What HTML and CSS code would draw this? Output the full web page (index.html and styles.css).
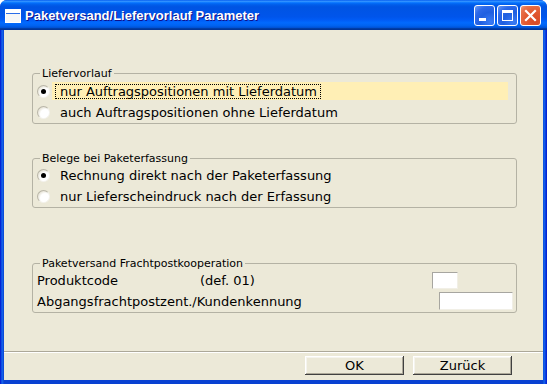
FILE: index.html
```html
<!DOCTYPE html>
<html lang="de">
<head>
<meta charset="utf-8">
<title>Paketversand/Liefervorlauf Parameter</title>
<link rel="stylesheet" href="styles.css">
</head>
<body>
<div class="window">
  <div class="titlebar">
    <svg class="app-icon" width="16" height="14" viewBox="0 0 16 14">
      <rect x="0.5" y="0.5" width="15" height="13" fill="#fff" stroke="#fff"/>
      <rect x="1" y="1" width="14" height="3" fill="#fff"/>
      <rect x="1" y="4" width="14" height="1" fill="#2a6ce8"/>
      <rect x="1" y="5" width="14" height="8" fill="#f6f6f6"/>
    </svg>
    <span class="title">Paketversand/Liefervorlauf Parameter</span>
    <div class="controls">
      <span class="ctl ctl-min"><svg width="19" height="19" viewBox="0 0 19 19"><rect x="4" y="12" width="7" height="3" fill="#fff"/></svg></span>
      <span class="ctl ctl-max"><svg width="19" height="19" viewBox="0 0 19 19"><rect x="4.5" y="4.5" width="10" height="10" fill="none" stroke="#fff" stroke-width="1"/><rect x="4" y="4" width="11" height="3" fill="#fff"/></svg></span>
      <span class="ctl ctl-close"><svg width="19" height="19" viewBox="0 0 19 19"><path d="M5 5 L14 14 M14 5 L5 14" stroke="#fff" stroke-width="2.2" stroke-linecap="square"/></svg></span>
    </div>
  </div>
  <div class="client">
    <div class="content">
      <fieldset class="group g1">
        <legend>Liefervorlauf</legend>
        <div class="opt">
          <span class="radio checked"></span>
          <span class="lbl hl"><span class="focus">nur Auftragspositionen mit Lieferdatum</span></span>
        </div>
        <div class="opt">
          <span class="radio"></span>
          <span class="lbl plain">auch Auftragspositionen ohne Lieferdatum</span>
        </div>
      </fieldset>

      <fieldset class="group g2">
        <legend>Belege bei Paketerfassung</legend>
        <div class="opt">
          <span class="radio checked"></span>
          <span class="lbl plain">Rechnung direkt nach der Paketerfassung</span>
        </div>
        <div class="opt">
          <span class="radio"></span>
          <span class="lbl plain">nur Lieferscheindruck nach der Erfassung</span>
        </div>
      </fieldset>

      <fieldset class="group g3">
        <legend>Paketversand Frachtpostkooperation</legend>
        <div class="field-row r1">
          <span class="fl-label">Produktcode</span>
          <span class="fl-hint">(def. 01)</span>
          <span class="input in-code"></span>
        </div>
        <div class="field-row r2">
          <span class="fl-label">Abgangsfrachtpostzent./Kundenkennung</span>
          <span class="input in-kenn"></span>
        </div>
      </fieldset>
    </div>
    <div class="footer">
      <button class="btn">OK</button>
      <button class="btn">Zurück</button>
    </div>
  </div>
</div>
</body>
</html>
```
FILE: styles.css
```css
html, body {
  margin: 0;
  padding: 0;
  background: #ffffff;
}

body {
  font-family: "DejaVu Sans", Verdana, sans-serif;
  font-size: 13px;
  color: #000;
}

.window {
  width: 547px;
  height: 384px;
  display: flex;
  flex-direction: column;
  background: linear-gradient(to right, #0019cf 0, #0831d9 1px, #166aee 2px, #0841d2 4px, #0841d2 543px, #166aee 544px, #0831d9 546px, #0019cf 547px);
  border-radius: 7px 7px 0 0;
  overflow: hidden;
}

.titlebar {
  height: 30px;
  flex: none;
  display: flex;
  align-items: center;
  padding: 0 6px 0 5px;
  background: linear-gradient(to bottom, #0058ee 0%, #3593ff 4%, #288eff 6%, #127dff 8%, #036ffc 10%, #0262ee 14%, #0057e5 20%, #0054e3 24%, #0055eb 56%, #005bf5 66%, #026afe 76%, #0062ef 86%, #0052d6 92%, #0040ab 94%, #003092 100%);
}

.app-icon {
  flex: none;
  margin-right: 4px;
  margin-top: 1px;
}

.title {
  flex: 1;
  color: #fff;
  font-family: "Liberation Sans", Arial, sans-serif;
  font-weight: bold;
  font-size: 13px;
  text-shadow: 1px 1px #0f1089;
}

.controls {
  display: flex;
  gap: 2px;
  margin-top: 1px;
}

.ctl {
  width: 19px;
  height: 19px;
  border: 1px solid #fff;
  border-radius: 3px;
  display: block;
}

.ctl svg {
  display: block;
}

.ctl-min, .ctl-max {
  background: radial-gradient(circle at 80% 85%, #3b7cf4 0, #1f5fe0 45%, #2c68e8 70%, #6b9bf5 100%);
}

.ctl-close {
  background: radial-gradient(circle at 75% 80%, #d94a26 0, #e25b32 50%, #e8734c 80%, #f0a084 100%);
}

.client {
  flex: 1;
  margin: 0 4px 4px 4px;
  background: #ece9d8;
  display: flex;
  flex-direction: column;
}

.content {
  padding: 0 26px 0 28px;
  display: flex;
  flex-direction: column;
}

.group {
  margin: 0;
  padding: 0 0 2px 4px;
  border: 1px solid #b4b2a4;
  border-radius: 3px;
  min-width: 0;
}

.group legend {
  font-size: 11px;
  line-height: 13px;
  padding: 0 2px;
  margin-left: 3px;
}

.g1 { margin-top: 37px; }
.g2 { margin-top: 28px; }
.g3 { margin-top: 49px; padding-bottom: 0; }

.opt {
  display: flex;
  align-items: center;
  height: 18px;
  margin-top: 3px;
}

.g1 .opt:first-of-type { margin-top: 2px; }
.g2 .opt:first-of-type { margin-top: 1px; }

.radio {
  flex: none;
  width: 13px;
  height: 13px;
  border-radius: 50%;
  box-sizing: border-box;
  background: radial-gradient(circle at 65% 65%, #ffffff 0, #ffffff 45%, #e6e3d6 75%, #b8b5a6 100%);
  border: 1px solid #b9b6a8;
  border-bottom-color: #f4f3ee;
  border-right-color: #f4f3ee;
  position: relative;
}

.radio.checked::after {
  content: "";
  position: absolute;
  left: 3px;
  top: 3px;
  width: 5px;
  height: 5px;
  border-radius: 50%;
  background: #000;
}

.lbl {
  flex: 1;
  margin-left: 2px;
  margin-right: 8px;
  height: 18px;
  display: flex;
  align-items: center;
  line-height: 13px;
  white-space: nowrap;
}

.lbl.hl {
  background: #ffefb5;
}

.lbl.plain {
  padding-left: 8px;
}

.focus {
  margin-left: 3px;
  padding: 0 3px 0 4px;
  border: 1px dotted #000;
}

.field-row {
  display: flex;
  align-items: center;
  white-space: nowrap;
}

.field-row.r1 { height: 20px; }
.field-row.r2 { height: 22px; }

.fl-label {
  width: 163px;
  flex: none;
}

.r2 .fl-label {
  width: auto;
}

.input {
  margin-left: auto;
  background: #fff;
  border: 1px solid;
  border-color: #a7a6a0 #f1efe6 #f1efe6 #a7a6a0;
  box-sizing: border-box;
  display: block;
}

.in-code {
  width: 26px;
  height: 17px;
  margin-right: 58px;
}

.in-kenn {
  width: 74px;
  height: 18px;
  margin-right: 3px;
}

.footer {
  margin-top: auto;
  border-top: 1px solid #aca899;
  box-shadow: inset 0 1px #ffffff;
  padding: 4px 31px 5px 0;
  display: flex;
  justify-content: flex-end;
  gap: 9px;
}

.btn {
  width: 99px;
  height: 19px;
  padding: 0;
  margin: 0;
  border: none;
  background: #ece9d8;
  font-family: "DejaVu Sans", Verdana, sans-serif;
  font-size: 13px;
  color: #000;
  box-shadow: inset -1px -1px #404040, inset 1px 1px #ffffff, inset -2px -2px #aca899, inset 2px 2px #f5f4ee;
}
```
